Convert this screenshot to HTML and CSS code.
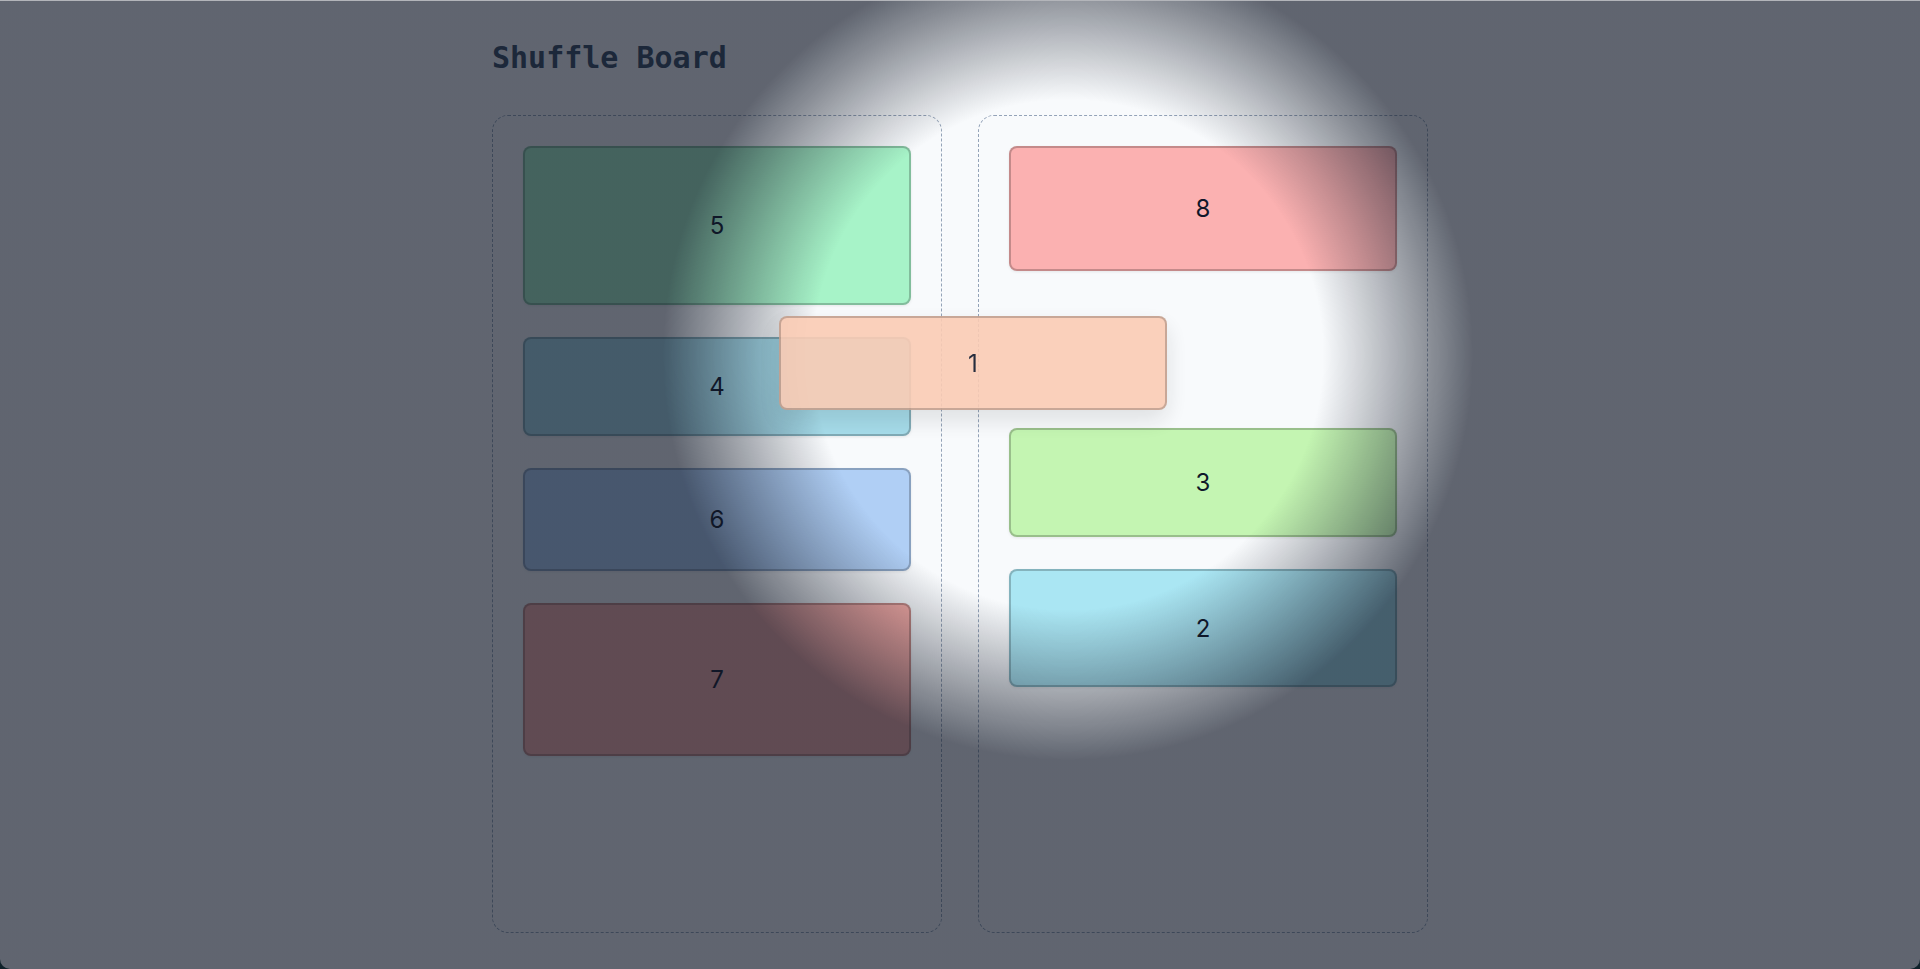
FILE: index.html
```html
<!DOCTYPE html>
<html lang="en">
<head>
    <meta charset="UTF-8">
    <meta name="viewport" content="width=device-width, initial-scale=1.0">
    <title>Shuffle Board</title>
    <link rel="stylesheet" href="styles.css">
</head>
<body>
    <div class="page">
        <h1 class="title">Shuffle Board</h1>

        <div class="board">
            <div class="column">
                <div class="card green" style="height: 159px">5</div>
                <div class="card cyan" style="height: 99px">4</div>
                <div class="card blue" style="height: 103px">6</div>
                <div class="card rose" style="height: 153px">7</div>
            </div>

            <div class="column">
                <div class="card red" style="height: 125px">8</div>
                <!-- slot left behind by the card being dragged -->
                <div class="slot" style="height: 93px"></div>
                <div class="card lime" style="height: 109px">3</div>
                <div class="card sky" style="height: 118px">2</div>
            </div>
        </div>
    </div>

    <!-- dim everything except the area round the pointer -->
    <div class="spotlight"></div>

    <div class="card peach dragging" style="left: 779px; top: 316px; width: 388px; height: 94px">1</div>
</body>
</html>
```

FILE: styles.css
```css
* {
    margin: 0;
    padding: 0;
    box-sizing: border-box;
}

html {
    background: #0f3633;
}

body {
    font-family: Inter, 'Noto Sans', sans-serif;
    background: #f8fafc;
    border-top: 1px solid #b3b5ba;
    border-radius: 0 0 10px 10px;
    height: 100vh;
    overflow: hidden;
}

.page {
    height: 100%;
    display: flex;
    flex-direction: column;
    width: 936px;
    margin: 0 auto;
    padding: 39px 0 36px;
}

.title {
    font-family: 'DejaVu Sans Mono', monospace;
    font-size: 30px;
    line-height: 36px;
    font-weight: bold;
    color: #34465e;
    margin-bottom: 39px;
}

.board {
    flex: 1;
    display: grid;
    grid-template-columns: 1fr 1fr;
    gap: 36px;
}

.column {
    border: 1px dashed #94a3b8;
    border-radius: 16px;
    padding: 30px;
    display: flex;
    flex-direction: column;
    gap: 32px;
}

.card {
    display: flex;
    align-items: center;
    justify-content: center;
    font-size: 24px;
    color: #0f172a;
    border: 2px solid rgba(0, 0, 0, 0.22);
    border-radius: 8px;
    box-shadow: 0 1px 3px rgba(0, 0, 0, 0.08);
    flex-shrink: 0;
}

.green { background: #a7f3c8; }
.cyan { background: #a6dcea; }
.blue { background: #b0cff5; }
.rose { background: #f8aca6; }
.red { background: #fbb1b1; }
.lime { background: #c4f5b2; }
.sky { background: #aae6f3; }
.peach { background: #facbb4; }

.slot {
    flex-shrink: 0;
}

.spotlight {
    position: fixed;
    top: 1px;
    left: 0;
    right: 0;
    bottom: 0;
    pointer-events: none;
    z-index: 10;
    background: radial-gradient(circle at 1068px 354px, rgba(17, 24, 39, 0) 255px, rgba(17, 24, 39, 0.66) 405px);
}

.dragging {
    position: fixed;
    z-index: 20;
    opacity: 0.9;
    box-shadow: 0 10px 25px rgba(0, 0, 0, 0.12);
}
```
